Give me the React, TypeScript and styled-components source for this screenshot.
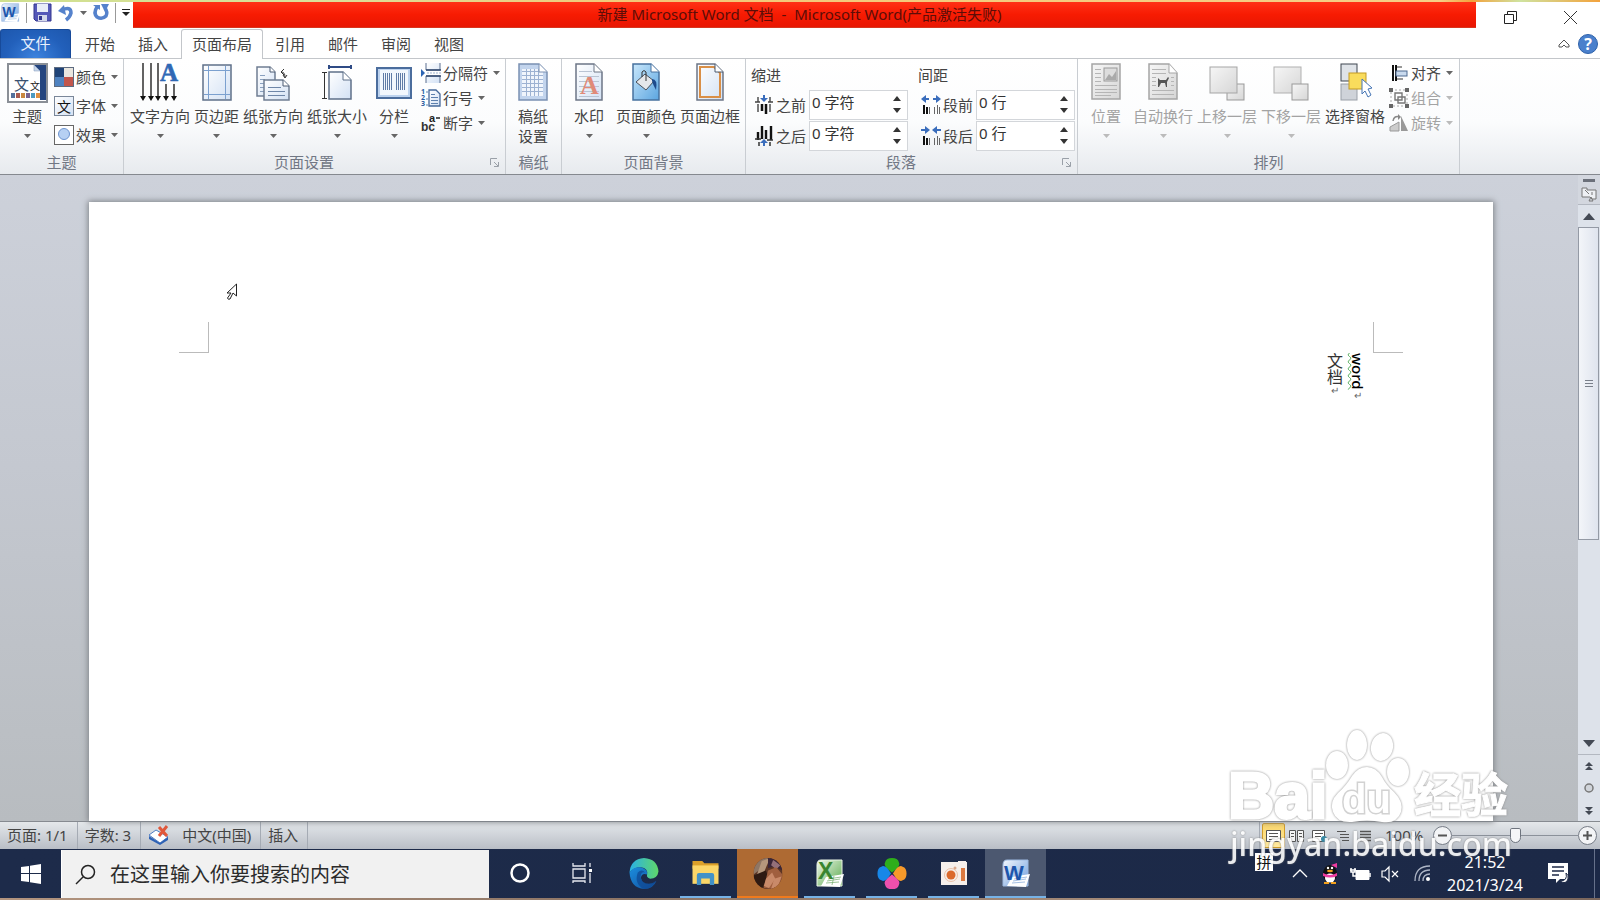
import React, { useState } from "react";
import styled, { createGlobalStyle, css } from "styled-components";

const GlobalStyle = createGlobalStyle`
  *, *::before, *::after { box-sizing: border-box; }
  html, body { margin: 0; padding: 0; }
  body {
    font-family: "Noto Sans", "Noto Sans CJK SC", sans-serif;
    font-size: 15px;
    line-height: 20px;
    color: #444;
  }
  button, input {
    font: inherit;
    color: inherit;
    margin: 0;
    padding: 0;
    border: 0;
    background: none;
    outline: none;
  }
  svg { display: block; flex: none; overflow: visible; }
`;

const Desktop = styled.div`
  position: relative;
  display: flex;
  flex-direction: column;
  min-height: 100vh;
  overflow: hidden;
  background: #fff;
`;

/* ---------- title bar ---------- */

const TopStrip = styled.div`
  height: 2px;
  background: linear-gradient(90deg, #cfe08f 0, #dbe09a 20%, #f3c777 40%, #f6cf86 90%, #f3a23c 92%, #cfe3a0 95%, #f3a23c 100%);
`;

const TitleBar = styled.header`
  display: flex;
  height: 27px;
`;

const QuickAccess = styled.div`
  display: flex;
  align-items: center;
  width: 133px;
  padding: 0 0 6px 1px;
  gap: 6px;
`;

const PlainButton = styled.button`
  display: flex;
  align-items: center;
  justify-content: center;
`;

const QuickDivider = styled.span`
  width: 1px;
  height: 20px;
  background: #999;
`;

const WindowTitle = styled.h1`
  flex: 1;
  margin: 0;
  padding-right: 10px;
  height: 26px;
  font-size: 15px;
  font-weight: 400;
  line-height: 25px;
  text-align: center;
  color: #5c0d08;
  background: linear-gradient(#ff3116, #f71b02 50%, #e81602);
  border-bottom: 1px solid #d8361f;
  span { padding: 0 4px; }
`;

const WindowButtons = styled.div`
  display: flex;
  width: 124px;
  padding: 3px 0 0 4px;
  button { flex: 1; }
`;

/* ---------- tabs ---------- */

const TabRow = styled.nav`
  display: flex;
  align-items: stretch;
  height: 30px;
  border-bottom: 1px solid #c3c6ca;
`;

const FileTab = styled.button`
  width: 71px;
  margin-right: 3px;
  padding-bottom: 2px;
  color: #e9f1fd;
  border: 1px solid #174a9a;
  border-bottom: 0;
  border-radius: 3px 3px 0 0;
  background: radial-gradient(ellipse at 50% 100%, #3d83de, #2260bb 60%, #1d57ad);
`;

const Tab = styled.button<{ $active?: boolean }>`
  padding: 0 10px 1px;
  margin: 0 1px -1px 0;
  border: 1px solid transparent;
  border-bottom: 0;
  ${(p) =>
    p.$active &&
    css`
      margin: 0 1px -1px 1px;
      background: #fff;
      border-color: #c3c6ca;
      border-radius: 3px 3px 0 0;
    `}
`;

const TabTools = styled.div`
  display: flex;
  align-items: center;
  gap: 8px;
  margin-left: auto;
  padding-right: 2px;
`;

/* ---------- ribbon ---------- */

const Ribbon = styled.section`
  display: flex;
  height: 116px;
  background: linear-gradient(#fff, #fbfcfd 55%, #e7eaee);
  border-bottom: 1px solid #85898f;
`;

const Group = styled.section<{ $w: number }>`
  display: flex;
  flex-direction: column;
  width: ${(p) => p.$w}px;
  border-right: 1px solid #c9cdd2;
`;

const GroupBody = styled.div<{ $pad?: number }>`
  display: flex;
  align-items: flex-start;
  height: 91px;
  padding-left: ${(p) => p.$pad ?? 2}px;
`;

const GroupFooter = styled.div`
  display: flex;
  align-items: center;
  height: 24px;
  padding: 0 6px;
  color: #717784;
`;

const GroupName = styled.h2<{ $inset?: boolean }>`
  flex: 1;
  margin: 0;
  padding-right: ${(p) => (p.$inset ? 12 : 0)}px;
  font-size: 15px;
  font-weight: 400;
  line-height: 20px;
  text-align: center;
`;

const LargeButton = styled.button<{ $dim?: boolean; $min?: number }>`
  display: flex;
  flex-direction: column;
  align-items: center;
  min-width: ${(p) => p.$min ?? 50}px;
  padding: 4px 2px 0;
  white-space: nowrap;
  line-height: 20px;
  color: ${(p) => (p.$dim ? "#a3a3a3" : "#444")};
`;

const IconBox = styled.span`
  display: flex;
  align-items: flex-start;
  justify-content: center;
  height: 43px;
`;

const ArrowBox = styled.span`
  display: flex;
  align-items: center;
  height: 20px;
`;

const SmallStack = styled.div<{ $row: number; $top: number }>`
  display: flex;
  flex-direction: column;
  padding: ${(p) => p.$top}px 0 0 2px;
  button { height: ${(p) => p.$row}px; }
`;

const SmallButton = styled.button<{ $dim?: boolean }>`
  display: flex;
  align-items: center;
  gap: 2px;
  white-space: nowrap;
  color: ${(p) => (p.$dim ? "#a3a3a3" : "#444")};
  svg:last-child { margin-left: 3px; }
`;

const SpinGroup = styled(GroupBody)`
  gap: 10px;
  padding-top: 4px;
`;

const SpinColumn = styled.div`
  display: flex;
  flex-direction: column;
`;

const SpinTitle = styled.div`
  height: 26px;
  padding-top: 2px;
`;

const SpinRow = styled.div`
  display: flex;
  align-items: center;
  height: 31px;
  padding-left: 3px;
  label {
    display: flex;
    align-items: center;
    gap: 2px;
    width: 55px;
  }
`;

const SpinField = styled.div`
  display: flex;
  width: 99px;
  height: 30px;
  background: #fff;
  border: 1px solid #d3d6da;
  input {
    flex: 1;
    min-width: 0;
    padding: 0 0 5px 2px;
    color: #333;
  }
`;

const SpinButtons = styled.div`
  display: flex;
  flex-direction: column;
  width: 20px;
  padding: 2px 0;
  button { flex: 1; }
`;

/* ---------- document ---------- */

const Workspace = styled.main`
  position: relative;
  display: flex;
  flex: 1;
  background: linear-gradient(#cdd1da, #c4c8d0 45%, #b8bcc0);
`;

const Sheet = styled.article`
  flex: 1;
  margin: 27px 85px 0 89px;
  padding: 120px 90px 0;
  background: #fff;
  box-shadow: 0 0 6px 1px #7d8287;
`;

const MarginMarks = styled.div`
  display: flex;
  justify-content: space-between;
`;

const Mark = styled.span<{ $side: "left" | "right" }>`
  width: 30px;
  height: 31px;
  border-bottom: 1px solid #bbb;
  ${(p) => (p.$side === "left" ? "border-right" : "border-left")}: 1px solid #bbb;
`;

const BodyText = styled.div`
  writing-mode: vertical-rl;
  width: 100%;
  height: 60px;
  padding-right: 34px;
  color: #333;
  line-height: 23px;
  p { margin: 0; }
`;

const LatinWord = styled.span`
  font-size: 15px;
  font-weight: 500;
  color: #000;
  text-decoration: underline wavy #4faa57 1px;
  text-underline-position: left;
  text-underline-offset: -2px;
`;

const CjkWord = styled.span`
  font-family: "Noto Sans CJK SC", sans-serif;
  font-size: 16px;
`;

const Return = styled.span`
  font-size: 10px;
  text-orientation: upright;
  color: #666;
`;

const Pointer = styled.span`
  position: absolute;
  left: 226px;
  top: 108px;
`;

const Scrollbar = styled.aside`
  display: flex;
  flex-direction: column;
  width: 22px;
  background: #dde2ea;
  button { width: 100%; height: 22px; flex: none; }
`;

const SplitBox = styled.div`
  display: flex;
  flex-direction: column;
  align-items: center;
  gap: 4px;
  height: 30px;
  padding-top: 4px;
  background: #d3d7df;
  border-bottom: 1px solid #b3b8c1;
`;

const ScrollTrack = styled.div`
  flex: 1;
  padding-right: 1px;
`;

const ScrollThumb = styled.div`
  display: flex;
  align-items: center;
  justify-content: center;
  height: 62%;
  border: 1px solid #949aa5;
  background: linear-gradient(90deg, #f3f5f9, #dfe4ee);
`;

const BrowseButtons = styled.div`
  border-top: 1px solid #b3b8c1;
`;

/* ---------- status bar ---------- */

const StatusBar = styled.footer`
  display: flex;
  align-items: stretch;
  height: 28px;
  padding-right: 3px;
  border-top: 1px solid #868a90;
  background: linear-gradient(#e4e7ea, #cfd3d9 50%, #b9bec6);
`;

const StatusCell = styled.div`
  display: flex;
  align-items: center;
  gap: 12px;
  padding: 0 9px 2px 7px;
  border-right: 1px solid #a5abb4;
`;

const ViewButtons = styled.div`
  display: flex;
  align-items: center;
  margin-left: auto;
  padding: 0 8px 0 2px;
  border-left: 1px solid #a5abb4;
`;

const ViewButton = styled.button<{ $active?: boolean }>`
  display: flex;
  align-items: center;
  justify-content: center;
  width: 23px;
  height: 25px;
  ${(p) =>
    p.$active &&
    css`
      border: 1px solid #d19c29;
      border-radius: 2px;
      background: linear-gradient(#fbd66a, #ffe9a0);
    `}
`;

const ZoomArea = styled.div`
  display: flex;
  align-items: center;
  output { width: 48px; padding-bottom: 2px; }
`;

const RoundButton = styled.button`
  display: flex;
  align-items: center;
  justify-content: center;
  width: 19px;
  height: 19px;
  border: 1px solid #777d87;
  border-radius: 50%;
  background: #f3f4f6;
`;

const ZoomRange = styled.input`
  appearance: none;
  width: 126px;
  height: 20px;
  background: linear-gradient(#8b919a, #8b919a) center / 100% 1px no-repeat;
  &::-webkit-slider-thumb {
    appearance: none;
    width: 11px;
    height: 15px;
    border: 1px solid #6e747e;
    border-radius: 2px 2px 6px 6px;
    background: #f5f6f8;
  }
`;

/* ---------- task bar ---------- */

const TaskBar = styled.div`
  display: flex;
  height: 49px;
  background: linear-gradient(90deg, #1d2b4a, #1c2947);
`;

const StartButton = styled(PlainButton)`
  width: 61px;
`;

const SearchBox = styled.label`
  display: flex;
  align-items: center;
  gap: 14px;
  width: 428px;
  margin-top: 1px;
  padding-left: 13px;
  background: #f1f1f1;
  border-left: 1px solid #fff;
  input {
    flex: 1;
    min-width: 0;
    height: 30px;
    font-size: 20px;
  }
  input::placeholder { color: #2b2b2b; opacity: 1; }
`;

const TaskItems = styled.div`
  display: flex;
  gap: 1px;
`;

const TaskItem = styled.button<{ $state?: "running" | "alert" | "active" }>`
  display: flex;
  flex-direction: column;
  align-items: center;
  justify-content: space-between;
  width: 61px;
  background: ${(p) => (p.$state === "alert" ? "#ae6a33" : p.$state === "active" ? "#4c5870" : "transparent")};
  &::before { content: ""; height: 1px; }
  &::after {
    content: "";
    width: ${(p) => (p.$state === "running" ? 51 : 61)}px;
    height: 2px;
    background: ${(p) => (p.$state === "alert" ? "#f07a1c" : p.$state ? "#76b2e6" : "transparent")};
  }
`;

const Tray = styled.div`
  display: flex;
  align-items: center;
  margin-left: auto;
  padding-right: 5px;
  color: #fff;
`;

const TrayButton = styled(PlainButton)<{ $w?: number }>`
  width: ${(p) => p.$w ?? 30}px;
  height: 40px;
`;

const ImeBadge = styled.button`
  align-self: flex-start;
  width: 18px;
  height: 18px;
  margin: 4px 12px 0 0;
  color: #111;
  font-size: 15px;
  line-height: 18px;
  background: #fff;
`;

const Clock = styled.time`
  width: 86px;
  margin: 0 20px 0 3px;
  font-size: 16px;
  line-height: 23px;
  text-align: center;
`;

const DesktopPeek = styled.span`
  align-self: stretch;
  width: 1px;
  margin-left: 25px;
  background: #66718a;
`;

const BottomStrip = styled.div`
  height: 2px;
  background: linear-gradient(90deg, #b3957f, #8d7565 40%, #a48a78 70%, #7b675c);
`;

/* ---------- watermark ---------- */

const Watermark = styled.div`
  position: absolute;
  right: 86px;
  bottom: 38px;
  width: 286px;
  pointer-events: none;
  color: #fff;
`;

const WatermarkLogo = styled.div`
  display: flex;
  align-items: flex-end;
  height: 96px;
  filter: drop-shadow(0 0 1px #8a8a8a);
`;

const LogoLatin = styled.span`
  width: 96px;
  font-family: "Liberation Sans", Arial, sans-serif;
  font-size: 64px;
  font-weight: 700;
  line-height: 60px;
  text-align: right;
  -webkit-text-stroke: 3px #fff;
`;

const LogoCjk = styled.span`
  padding: 0 0 6px 2px;
  font-family: "Noto Sans CJK SC", sans-serif;
  font-size: 47px;
  font-weight: 700;
  line-height: 56px;
  white-space: nowrap;
  -webkit-text-stroke: 1px #fff;
`;

const WatermarkSite = styled.div`
  font-size: 32px;
  font-weight: 500;
  line-height: 36px;
  white-space: nowrap;
  text-align: center;
  opacity: 0.9;
  text-shadow: 0 0 2px #777;
`;

/* ---------- icons ---------- */

const Caret = ({ dim, up, big, color }: { dim?: boolean; up?: boolean; big?: boolean; color?: string }) => (
  <svg width={big ? 12 : color ? 8 : 7} height={big ? 7 : color ? 5 : 4} viewBox="0 0 8 4" preserveAspectRatio="none">
    <path d={up ? "M0 4L4 0L8 4Z" : "M0 0H8L4 4Z"} fill={color ?? (dim ? "#bbb" : "#666")} />
  </svg>
);

const IconDefs = () => (
  <svg width="0" height="0" style={{ position: "absolute" }} aria-hidden="true">
    <defs>
      <linearGradient id="paper" x1="0" y1="0" x2="1" y2="1">
        <stop offset="0" stopColor="#fff" />
        <stop offset="1" stopColor="#d3e1f4" />
      </linearGradient>
      <linearGradient id="sky" x1="0" y1="0" x2="1" y2="1">
        <stop offset="0" stopColor="#c9e7fb" />
        <stop offset="1" stopColor="#5ba5e0" />
      </linearGradient>
      <linearGradient id="grey" x1="0" y1="0" x2="1" y2="1">
        <stop offset="0" stopColor="#f6f6f6" />
        <stop offset="1" stopColor="#d6d6d6" />
      </linearGradient>
      <linearGradient id="excel" x1="0" y1="0" x2="1" y2="1">
        <stop offset="0" stopColor="#f1f8ec" />
        <stop offset="1" stopColor="#58a94b" />
      </linearGradient>
      <linearGradient id="word" x1="0" y1="0" x2="1" y2="1">
        <stop offset="0" stopColor="#f4f8fe" />
        <stop offset="1" stopColor="#6b9bdc" />
      </linearGradient>
      <linearGradient id="edgeTop" x1="0" y1="0" x2="1" y2="0">
        <stop offset="0" stopColor="#2ab0e6" />
        <stop offset="1" stopColor="#5fd76a" />
      </linearGradient>
      <linearGradient id="edgeLow" x1="0" y1="0" x2="1" y2="1">
        <stop offset="0" stopColor="#1b8ede" />
        <stop offset="1" stopColor="#124f9e" />
      </linearGradient>
    </defs>
  </svg>
);

const WordMark = ({ size }: { size: number }) => (
  <svg width={size} height={size} viewBox="0 0 28 28">
    <path d="M5 1H26V27H1V6Q1 1 5 1Z" fill="url(#word)" stroke="#9db9e0" />
    <path d="M10 18L28 15L24 28L5 27Z" fill="#fff" />
    <path d="M12 20L25 18M11 22L24 20M10 24L23 23" stroke="#8fb0dc" strokeWidth=".8" />
    <text x="2" y="21" fontSize="21" fontWeight="700" fontFamily="Liberation Sans, sans-serif" fill="#1d55ab">W</text>
  </svg>
);

const SaveIcon = () => (
  <svg width="19" height="19" viewBox="0 0 19 19">
    <path d="M1 1H18V18H3L1 16Z" fill="#5558b8" stroke="#34378f" />
    <rect x="4" y="1" width="11" height="8" fill="#e9edf8" />
    <rect x="5" y="12" width="9" height="6" fill="#d5d9ea" />
    <rect x="6" y="13" width="3" height="4" fill="#34378f" />
  </svg>
);

const UndoIcon = () => (
  <svg width="16" height="17" viewBox="0 0 16 17">
    <path d="M4 6Q13 2 13 9Q12 13 8 16" fill="none" stroke="#5582cc" strokeWidth="3.500" />
    <path d="M0 7L6 1L8 11Z" fill="#5582cc" />
  </svg>
);

const RedoIcon = () => (
  <svg width="16" height="17" viewBox="0 0 16 17">
    <path d="M4 3Q0 9 4 13Q9 16 13 12Q15 8 12 4" fill="none" stroke="#5582cc" strokeWidth="3.500" />
    <path d="M8 0H16L12 8Z" fill="#5582cc" />
    <path d="M0 1H7V6Z" fill="#5582cc" />
  </svg>
);

const ThemesIcon = () => (
  <svg width="41" height="40" viewBox="0 0 41 40">
    <rect x="1" y="1" width="39" height="38" fill="#fff" stroke="#8a8f96" strokeWidth="2" />
    <path d="M27 2H39V37H33V8Z" fill="#24457f" />
    <path d="M27 2V8H33Z" fill="#c9d7ea" stroke="#7d94b8" strokeWidth=".5" />
    <text x="7" y="27" fontSize="15" fontFamily="Noto Sans CJK SC, sans-serif" fill="#38506f">文</text>
    <text x="23" y="27" fontSize="10" fontFamily="Noto Sans CJK SC, sans-serif" fill="#222">文</text>
    {["#54719c", "#a85a4f", "#c9883f", "#76628f", "#4d9ac0", "#e0903f"].map((c, i) => (
      <rect key={c} x={4 + i * 5} y="30" width="4" height="5" fill={c} />
    ))}
  </svg>
);

const ColorsIcon = () => (
  <svg width="20" height="20" viewBox="0 0 20 20">
    <rect width="10" height="10" fill="#1f4377" />
    <rect x="10" width="10" height="10" fill="#e9e6df" />
    <rect y="10" width="10" height="10" fill="#4f82c0" />
    <rect x="10" y="10" width="10" height="10" fill="#c2564c" />
    <rect x=".5" y=".5" width="19" height="19" fill="none" stroke="#5d6b80" />
  </svg>
);

const FontsIcon = () => (
  <svg width="20" height="20" viewBox="0 0 20 20">
    <rect x=".5" y=".5" width="19" height="19" fill="url(#paper)" stroke="#7a8799" />
    <text x="3" y="16" fontSize="14" fontFamily="Noto Sans CJK SC, sans-serif" fill="#111">文</text>
  </svg>
);

const EffectsIcon = () => (
  <svg width="20" height="20" viewBox="0 0 20 20">
    <rect x=".5" y=".5" width="19" height="19" fill="#fff" stroke="#666" />
    <circle cx="10" cy="9" r="5.5" fill="#b6d0f3" stroke="#6d94cf" />
  </svg>
);

const TextDirectionIcon = () => (
  <svg width="38" height="38" viewBox="0 0 38 38">
    <g stroke="#222" strokeWidth="1.4">
      <path d="M2 0V36M10 0V36M17 0V36M25 21V36M33 21V36" />
    </g>
    <g fill="#111">
      {[2, 10, 17, 25, 33].map((x) => (
        <path key={x} d={`M${x - 3} 33H${x + 3}L${x} 38Z`} />
      ))}
    </g>
    <text x="19" y="18" fontSize="25" fontWeight="700" fontFamily="Liberation Serif, serif" fill="#2f68b5" stroke="#2f68b5" strokeWidth=".6">A</text>
  </svg>
);

const MarginsIcon = () => (
  <svg width="30" height="38" viewBox="0 0 30 38">
    <rect x="1" y="2" width="28" height="35" fill="url(#paper)" stroke="#5f7089" strokeWidth="1.5" />
    <path d="M6.500 3V36M23.500 3V36M2 7.500H28M2 31.500H28" stroke="#7ba0cf" />
  </svg>
);

const OrientationIcon = () => (
  <svg width="34" height="38" viewBox="0 0 34 38">
    <path d="M1 4H14L19 9V33H1Z" fill="url(#paper)" stroke="#6f7d92" strokeWidth="1.500" />
    <path d="M4 12.500H9M4 16.500H9M4 20.500H8M4 24.500H8M4 28.500H8" stroke="#89a0bf" />
    <path d="M8 17H27L33 23V37H8Z" fill="url(#paper)" stroke="#6f7d92" strokeWidth="1.500" />
    <path d="M14 4V9H19M27 17V23H33" fill="#fff" stroke="#4a5a73" />
    <path d="M12 24.500H25M12 28.500H29M12 32.500H29" stroke="#6e86a8" />
    <path d="M25 9Q29 9 29 14M25 9L28 6M25 9L28 12M27 12L29 15L31 12" fill="none" stroke="#333" />
  </svg>
);

const SizeIcon = () => (
  <svg width="30" height="38" viewBox="0 0 30 38">
    <path d="M7 4H29M7 2V6M29 2V6" stroke="#2f4b85" strokeWidth="2" />
    <path d="M2.500 9V36M0 9.500H5M0 35.500H5" stroke="#333" />
    <path d="M7 9H21L29 17V36H7Z" fill="url(#paper)" stroke="#5f7089" strokeWidth="1.500" />
    <path d="M21 9V17H29" fill="#fff" stroke="#5f7089" />
  </svg>
);

const ColumnsIcon = () => (
  <svg width="36" height="38" viewBox="0 0 36 38">
    <rect x="1" y="5" width="34" height="30" fill="#bdd3ef" stroke="#4b6d9d" strokeWidth="2" />
    <rect x="4" y="7" width="28" height="25" fill="#f2f7fd" />
    <path
      d="M7.500 10V27M9.500 10V27M11.500 10V27M13.500 10V27M15.500 10V27M20.500 10V27M22.500 10V27M24.500 10V27M26.500 10V27M28.500 10V27"
      stroke="#5f7ba6"
    />
  </svg>
);

const BreaksIcon = () => (
  <svg width="20" height="20" viewBox="0 0 20 20">
    <path d="M5 0V7H19V0M5 20V13H19V20" fill="url(#paper)" stroke="#5b6f8f" />
    <path d="M5 7H20M5 13H20" stroke="#31486f" strokeWidth="1.500" />
    <path d="M0 6L4 10L0 14Z" fill="#2d65b3" />
    <path d="M6 10H20" stroke="#9fb3cf" strokeDasharray="2 1" />
  </svg>
);

const LineNumbersIcon = () => (
  <svg width="20" height="20" viewBox="0 0 20 20">
    {["1", "2", "3"].map((n, i) => (
      <text key={n} x="0" y={6 + i * 6} fontSize="7" fontWeight="700" fill="#2a5c9e">{n}</text>
    ))}
    <path d="M8 2H15L19 6V18H8Z" fill="url(#paper)" stroke="#46699a" strokeWidth="1.3" />
    <path d="M10 6.500H14M10 9.500H17M10 12.500H17M10 15.500H17M5 4H7M5 11H7M5 17H7" stroke="#5d80ae" />
  </svg>
);

const HyphenIcon = () => (
  <svg width="20" height="20" viewBox="0 0 20 20">
    <text x="8" y="9" fontSize="11" fontWeight="700" fontFamily="Liberation Sans, sans-serif" fill="#222">a</text>
    <path d="M15 5H19" stroke="#222" strokeWidth="1.5" />
    <text x="0" y="18" fontSize="12" fontWeight="700" fontFamily="Liberation Sans, sans-serif" fill="#333">bc</text>
  </svg>
);

const GridPaperIcon = () => (
  <svg width="30" height="38" viewBox="0 0 30 38">
    <path d="M1 1H21L29 9V37H1Z" fill="#c2d4ed" stroke="#7a90b2" strokeWidth="1.5" />
    <rect x="4" y="6" width="21" height="27" fill="#f0f5fc" />
    <path d="M4 8.500H25M4 12.500H25M4 16.500H25M4 20.500H25M4 24.500H25M4 28.500H25M8.500 6V33M12.500 6V33M16.500 6V33M20.500 6V33" stroke="#9db2d2" />
    <path d="M21 1V9H29" fill="#fff" stroke="#7a90b2" />
  </svg>
);

const WatermarkIcon = () => (
  <svg width="28" height="38" viewBox="0 0 28 38">
    <path d="M1 1H19L27 9V37H1Z" fill="url(#paper)" stroke="#6c7686" strokeWidth="1.5" />
    <path d="M4 8.500H17M4 13.500H24M4 18.500H24M4 23.500H24M4 28.500H24M4 33.500H24" stroke="#b9c4d3" />
    <text x="5" y="31" fontSize="26" fontWeight="700" fontFamily="Liberation Serif, serif" fill="#e08a78">A</text>
    <path d="M19 1V9H27" fill="#fff" stroke="#6c7686" />
  </svg>
);

const PageColorIcon = () => (
  <svg width="28" height="38" viewBox="0 0 28 38">
    <path d="M1 1H19L27 9V37H1Z" fill="url(#sky)" stroke="#47719f" strokeWidth="1.5" />
    <path d="M19 1V9H27" fill="#fff" stroke="#47719f" />
    <path d="M4 19L13 11L22 18L14 27Z" fill="#e5e7ea" stroke="#4a4f58" />
    <path d="M10 14V9Q12 6 14 9V18" fill="none" stroke="#333" />
    <path d="M20 16Q26 16 24 27Q21 22 20 18Z" fill="#1e4b8c" />
  </svg>
);

const BorderIcon = () => (
  <svg width="28" height="38" viewBox="0 0 28 38">
    <path d="M1 1H19L27 9V37H1Z" fill="url(#paper)" stroke="#6c7686" strokeWidth="1.5" />
    <path d="M4 4H18L24 10V34H4Z" fill="none" stroke="#d98f47" strokeWidth="2" />
    <path d="M19 1V9H27" fill="#fff" stroke="#4b5a70" />
  </svg>
);

const IndentIcon = ({ below }: { below?: boolean }) => (
  <svg width="20" height="20" viewBox="0 0 20 20">
    {below ? (
      <>
        <path d="M4 6V14M8 0V13M12 4V13M17 0V14" stroke="#111" strokeWidth="2.4" />
        <path d="M1 13H7M13 14H19M5 16V20M16 16V20" stroke="#333" strokeWidth="1.5" />
        <path d="M10 13L14 17H11V20H9V17H6Z" fill="#3a6dbc" />
      </>
    ) : (
      <>
        <path d="M4 2V7M1 7H6M16 2V7M14 7H19M4 9V17M16 9V17" stroke="#444" strokeWidth="1.4" />
        <path d="M8 9V16M12 9V19" stroke="#111" strokeWidth="2.5" />
        <path d="M10 7L6 3H9V0H11V3H14Z" fill="#3a6dbc" />
      </>
    )}
  </svg>
);

const SpacingIcon = ({ inward }: { inward?: boolean }) => (
  <svg width="20" height="20" viewBox="0 0 20 20">
    <path
      d={inward ? "M0 3H4V0L9 4L4 8V5H0ZM20 3H16V0L11 4L16 8V5H20Z" : "M8 3H5V0L0 4L5 8V5H8ZM12 3H15V0L20 4L15 8V5H12Z"}
      fill="#3a6dbc"
    />
    <path d="M3 10V19M6 12V19" stroke="#111" strokeWidth="2" />
    <path d="M8.500 12V19M13.500 12V19M16.500 10V19M18.500 12V19" stroke="#666" />
  </svg>
);

const PositionIcon = () => (
  <svg width="30" height="38" viewBox="0 0 30 38">
    <rect x="1" y="1" width="28" height="35" fill="url(#grey)" stroke="#a5a5a5" strokeWidth="1.5" />
    <path d="M4 6.500H10M4 10.500H10M4 14.500H10M4 18.500H10M4 22.500H26M4 26.500H26M4 29.500H26M4 32.500H20" stroke="#b5b5b5" />
    <rect x="13" y="5" width="13" height="13" fill="#ddd" stroke="#999" />
    <path d="M14 17L18 11L21 14L25 8V17Z" fill="#aaa" />
  </svg>
);

const WrapIcon = () => (
  <svg width="30" height="38" viewBox="0 0 30 38">
    <path d="M1 1H21L29 10V36H1Z" fill="url(#grey)" stroke="#a5a5a5" strokeWidth="1.5" />
    <path d="M21 1V10H29" fill="#fff" stroke="#a5a5a5" />
    <path d="M4 6.500H18M4 10.500H18M4 14.500H8M23 14.500H26M4 18.500H8M23 18.500H26M4 22.500H8M23 22.500H26M4 27.500H26M4 31.500H26" stroke="#b5b5b5" />
    <path d="M10 15L12 17L18 17L20 14L21 15L19 19V24H18L17 20L13 20L11 24H10V19Z" fill="#555" />
  </svg>
);

const LayerIcon = ({ back }: { back?: boolean }) => (
  <svg width="36" height="38" viewBox="0 0 36 38">
    {back ? (
      <>
        <rect x="1" y="4" width="27" height="26" fill="url(#grey)" stroke="#b0b0b0" />
        <rect x="19" y="21" width="16" height="16" fill="url(#grey)" stroke="#999" />
      </>
    ) : (
      <>
        <rect x="18" y="21" width="17" height="16" fill="url(#grey)" stroke="#999" />
        <rect x="1" y="4" width="27" height="26" fill="url(#grey)" stroke="#a5a5a5" />
      </>
    )}
  </svg>
);

const SelectionPaneIcon = () => (
  <svg width="34" height="38" viewBox="0 0 34 38">
    <rect x="3" y="1" width="16" height="17" fill="#dfe3e8" stroke="#3f4650" />
    <rect x="3" y="21" width="16" height="16" fill="#cfd3d9" stroke="#9aa0a8" />
    <rect x="11" y="10" width="17" height="16" fill="#f9dc5c" stroke="#c39a25" />
    <path d="M24 16L34 25L30 26L33 32L30 34L27 28L24 31Z" fill="#fff" stroke="#4474b4" />
  </svg>
);

const AlignIcon = () => (
  <svg width="20" height="20" viewBox="0 0 20 20">
    <path d="M4 2V18M7 2V18" stroke="#111" strokeWidth="2" />
    <path d="M8 4H13M8 16H14" stroke="#333" />
    <rect x="7" y="8" width="11" height="5" fill="#c9daee" stroke="#4e6a90" />
  </svg>
);

const GroupIcon = () => (
  <svg width="20" height="20" viewBox="0 0 20 20">
    <path d="M2 2H18V18H2Z" fill="none" stroke="#aaa" strokeDasharray="2 2" />
    <path d="M6 5H13V12H6ZM9 9H16V15H9Z" fill="none" stroke="#777" strokeWidth="1.4" />
    <path d="M0 0H4V4H0ZM16 0H20V4H16ZM0 16H4V20H0ZM16 16H20V20H16Z" fill="#666" />
  </svg>
);

const RotateIcon = () => (
  <svg width="20" height="20" viewBox="0 0 20 20">
    <path d="M1 14L10 9V18H1Z" fill="#ccc" stroke="#999" />
    <path d="M12 3L19 18H12Z" fill="#999" />
    <path d="M4 8Q5 2 11 4" fill="none" stroke="#888" strokeWidth="1.5" />
    <path d="M9 1L12 4L9 7Z" fill="#888" />
  </svg>
);

const LauncherIcon = () => (
  <svg width="9" height="9" viewBox="0 0 9 9">
    <path d="M.5 7V.5H7M4 4L8 8M8.500 4V8.500H4" fill="none" stroke="#9aa0a8" />
  </svg>
);

const PageViewIcon = ({ kind }: { kind: number }) => (
  <svg width="15" height="14" viewBox="0 0 15 14">
    {kind === 0 && <path d="M.5 1.500H14.500V12.500H.5ZM3 4.500H12M3 7.500H12M3 10.500H12" fill="#fff" stroke="#555" />}
    {kind === 1 && <path d="M.5 1.500H6.500V12.500H.5ZM8.500 1.500H14.500V12.500H8.500ZM2 4.500H5M2 7.500H5M10 4.500H13M10 7.500H13" fill="#f5f5f5" stroke="#555" />}
    {kind === 2 && (
      <>
        <path d="M.5 1.500H12.500V12.500H.5ZM3 4.500H11M3 7.500H9" fill="#fff" stroke="#555" />
        <circle cx="12" cy="10" r="3" fill="#388aa5" />
      </>
    )}
    {kind === 3 && <path d="M2 2.500H11M5 5.500H14M5 8.500H14M7 11.500H14" stroke="#555" />}
    {kind === 4 && <path d="M2 2.500H13M2 5.500H13M2 8.500H13M2 11.500H13" stroke="#555" strokeWidth="1.500" />}
  </svg>
);

const ProofIcon = () => (
  <svg width="22" height="20" viewBox="0 0 22 20">
    <path d="M1 10L8 5L20 12L12 18Z" fill="#fff" stroke="#4f7ec6" />
    <path d="M1 11V14L12 20L20 15V12L12 18Z" fill="#2e62b5" />
    <path d="M11 2L19 11M19 1L11 11" stroke="#e2583a" strokeWidth="3" />
  </svg>
);

const EdgeIcon = () => (
  <svg width="30" height="31" viewBox="0 0 28 30">
    <path d="M0 14Q1 1 14 0Q27 1 28 13Q27 20 20 20Q16 19 17 16Q18 10 11 9Q4 9 0 14Z" fill="url(#edgeTop)" />
    <path d="M0 14Q4 8 11 9Q18 11 17 16Q12 14 11 19Q12 26 21 25Q24 25 26 22Q23 30 14 30Q1 29 0 14Z" fill="url(#edgeLow)" />
    <path d="M8 14Q4 25 14 30Q22 30 26 22Q19 27 13 23Q10 20 11 16Q12 13 15 14Q12 10 8 14Z" fill="#0f4a94" opacity=".75" />
  </svg>
);

const FolderIcon = () => (
  <svg width="29" height="26" viewBox="0 0 26 24">
    <path d="M1 1H10L12 3H25V8H1Z" fill="#dba02a" />
    <path d="M1 5H25V22H1Z" fill="#fbd668" />
    <path d="M5 23V14Q5 12 7 12H19Q21 12 21 14V23H17V17H9V23Z" fill="#4392c7" />
  </svg>
);

const PortraitIcon = () => (
  <svg width="30" height="31" viewBox="0 0 28 30">
    <clipPath id="face"><ellipse cx="14" cy="15" rx="14" ry="15" /></clipPath>
    <g clipPath="url(#face)">
      <path d="M0 0H28V30H0Z" fill="#5c3524" />
      <path d="M0 0H14L8 10L0 16Z" fill="#8f7664" />
      <path d="M8 3L16 0L10 14L3 17Z" fill="#b5977c" />
      <path d="M14 0H28V12L20 8L14 10Z" fill="#3a2638" />
      <path d="M19 2L26 7L22 11L17 7Z" fill="#94707a" />
      <path d="M0 17L12 12L14 18L8 30H2Z" fill="#2f1a12" />
      <path d="M14 12L22 9L28 16V22L18 30L10 29Z" fill="#a05f3e" />
      <path d="M12 20L18 14L21 20L15 29L10 27Z" fill="#c98a69" />
      <path d="M20 20L27 18L24 27L17 30Z" fill="#c98a69" />
    </g>
  </svg>
);

const ExcelIcon = () => (
  <svg width="28" height="28" viewBox="0 0 28 28">
    <path d="M5 1H26V27H1V6Q1 1 5 1Z" fill="url(#excel)" stroke="#eaf4e5" />
    <path d="M10 18L28 15L24 28L5 27Z" fill="#fff" />
    <path d="M12 20L25 18M11 22L24 20M10 24L23 23M18 17L16 26" stroke="#7fb277" strokeWidth=".8" />
    <text x="2" y="20" fontSize="23" fontWeight="700" fontFamily="Liberation Sans, sans-serif" fill="#38852f">X</text>
  </svg>
);

const PetalsIcon = () => (
  <svg width="30" height="31" viewBox="0 0 30 32">
    <path d="M15 15Q5 8 8 4Q9 0 15 0Q21 0 22 4Q25 8 15 15Z" fill="#2eae1b" />
    <path d="M15 17Q25 24 22 28Q21 32 15 32Q9 32 8 28Q5 24 15 17Z" fill="#ee50ad" />
    <path d="M14 16Q8 6 4 9Q0 10 0 16Q0 22 4 23Q8 26 14 16Z" fill="#1787e8" />
    <path d="M16 16Q22 6 26 9Q30 10 30 16Q30 22 26 23Q22 26 16 16Z" fill="#f7992a" />
  </svg>
);

const RecorderIcon = () => (
  <svg width="28" height="26" viewBox="0 0 28 26">
    <path d="M1 2H18V1H26V2H27V25H1Z" fill="#f6efeb" />
    <circle cx="11" cy="15" r="4.500" fill="#db6a2d" />
    <circle cx="11" cy="15" r="6.5" fill="none" stroke="#eac2aa" />
    <circle cx="15" cy="8" r="1.500" fill="#dba88b" />
    <rect x="21" y="8" width="4" height="13" fill="#db7a42" />
  </svg>
);

const PenguinIcon = () => (
  <svg width="16" height="21" viewBox="0 0 16 21">
    <ellipse cx="8" cy="11" rx="7" ry="9" fill="#111" />
    <ellipse cx="8" cy="15" rx="5" ry="4.5" fill="#fff" />
    <path d="M1 10Q8 14 15 10V13Q8 16 1 13Z" fill="#ee3ba0" />
    <ellipse cx="8" cy="8" rx="3" ry="1.2" fill="#f2a01c" />
    <circle cx="6" cy="5" r="1.2" fill="#fff" />
    <circle cx="10" cy="5" r="1.2" fill="#fff" />
    <path d="M9 2L15 0V5Z" fill="#ee3ba0" />
    <path d="M2 19H7V21H2ZM9 19H14V21H9Z" fill="#f2a01c" />
  </svg>
);

const Paw = () => (
  <svg width="88" height="96" viewBox="0 0 88 96">
    <g fill="#fff">
      <ellipse cx="13" cy="35" rx="11" ry="14" />
      <ellipse cx="33" cy="15" rx="10" ry="15" />
      <ellipse cx="58" cy="17" rx="11" ry="14" transform="rotate(12 58 17)" />
      <ellipse cx="74" cy="42" rx="11" ry="14" />
      <path d="M43 37Q52 37 58 47Q62 55 70 62Q80 72 77 82Q73 94 58 92Q43 89 28 92Q13 93 9 82Q5 72 14 63Q22 56 28 46Q34 37 43 37Z" />
    </g>
    <text x="18" y="83" fontSize="40" fontWeight="700" fontFamily="Liberation Sans, sans-serif" fill="#fff" stroke="#d2d2d2" strokeWidth="3" paintOrder="stroke">du</text>
  </svg>
);

/* ---------- pieces ---------- */

type LargeProps = { icon: React.ReactNode; label: string; dim?: boolean; arrow?: boolean; min?: number; second?: string };

const Large = ({ icon, label, dim, arrow = true, min, second }: LargeProps) => (
  <LargeButton $dim={dim} $min={min} disabled={dim}>
    <IconBox>{icon}</IconBox>
    <span>{label}</span>
    {second ? <span>{second}</span> : <ArrowBox>{arrow && <Caret dim={dim} />}</ArrowBox>}
  </LargeButton>
);

const Small = ({ icon, label, dim }: { icon: React.ReactNode; label: string; dim?: boolean }) => (
  <SmallButton $dim={dim} disabled={dim}>
    {icon}
    <span>{label}</span>
    <Caret dim={dim} />
  </SmallButton>
);

const Footer = ({ name, launcher }: { name: string; launcher?: boolean }) => (
  <GroupFooter>
    <GroupName $inset={launcher}>{name}</GroupName>
    {launcher && <PlainButton aria-label={name}><LauncherIcon /></PlainButton>}
  </GroupFooter>
);

const Spin = ({ id, icon, label, initial }: { id: string; icon: React.ReactNode; label: string; initial: string }) => {
  const [value, setValue] = useState(initial);
  const step = (d: number) => {
    const [n, unit] = value.split(" ");
    setValue(`${Math.max(0, Number(n) + d)} ${unit}`);
  };
  return (
    <SpinRow>
      <label htmlFor={id}>{icon}{label}</label>
      <SpinField>
        <input id={id} value={value} onChange={(e) => setValue(e.target.value)} />
        <SpinButtons>
          <PlainButton aria-label="+" onClick={() => step(1)}><Caret up color="#333" /></PlainButton>
          <PlainButton aria-label="-" onClick={() => step(-1)}><Caret color="#333" /></PlainButton>
        </SpinButtons>
      </SpinField>
    </SpinRow>
  );
};

const TABS = ["开始", "插入", "页面布局", "引用", "邮件", "审阅", "视图"];

export default function App() {
  const [tab, setTab] = useState("页面布局");
  const [zoom, setZoom] = useState(100);

  return (
    <Desktop>
      <GlobalStyle />
      <IconDefs />
      <TopStrip />
      <TitleBar>
        <QuickAccess>
          <WordMark size={19} />
          <QuickDivider />
          <PlainButton aria-label="保存"><SaveIcon /></PlainButton>
          <PlainButton aria-label="撤消"><UndoIcon /></PlainButton>
          <Caret />
          <PlainButton aria-label="重复"><RedoIcon /></PlainButton>
          <QuickDivider />
          <PlainButton aria-label="自定义">
            <svg width="8" height="8" viewBox="0 0 8 8"><path d="M0 .5H8" stroke="#222" /><path d="M0 3H8L4 7Z" fill="#222" /></svg>
          </PlainButton>
        </QuickAccess>
        <WindowTitle>新建 Microsoft Word 文档<span> - </span>Microsoft Word(产品激活失败)</WindowTitle>
        <WindowButtons>
          <PlainButton aria-label="还原">
            <svg width="13" height="13" viewBox="0 0 13 13"><path d="M.5 3.5H9.5V12.5H.5ZM3.5 3V.5H12.5V9.5H10" fill="none" stroke="#222" /></svg>
          </PlainButton>
          <PlainButton aria-label="关闭">
            <svg width="13" height="13" viewBox="0 0 13 13"><path d="M0 0L13 13M13 0L0 13" stroke="#333" /></svg>
          </PlainButton>
        </WindowButtons>
      </TitleBar>

      <TabRow>
        <FileTab>文件</FileTab>
        {TABS.map((t) => (
          <Tab key={t} $active={t === tab} onClick={() => setTab(t)}>{t}</Tab>
        ))}
        <TabTools>
          <PlainButton aria-label="最小化功能区">
            <svg width="12" height="10" viewBox="0 0 12 10"><path d="M1 6L6 1L11 6V8H8L6 6L4 8H1Z" fill="#fff" stroke="#555" /></svg>
          </PlainButton>
          <PlainButton aria-label="帮助">
            <svg width="20" height="20" viewBox="0 0 20 20">
              <circle cx="10" cy="10" r="9.5" fill="#4a80cc" stroke="#2f62aa" />
              <text x="10" y="16" fontSize="16" fontWeight="700" textAnchor="middle" fill="#fff">?</text>
            </svg>
          </PlainButton>
        </TabTools>
      </TabRow>

      <Ribbon>
        <Group $w={124}>
          <GroupBody>
            <Large icon={<ThemesIcon />} label="主题" />
            <SmallStack $row={29} $top={3}>
              <Small icon={<ColorsIcon />} label="颜色" />
              <Small icon={<FontsIcon />} label="字体" />
              <Small icon={<EffectsIcon />} label="效果" />
            </SmallStack>
          </GroupBody>
          <Footer name="主题" />
        </Group>

        <Group $w={382}>
          <GroupBody $pad={4}>
            <Large icon={<TextDirectionIcon />} label="文字方向" />
            <Large icon={<MarginsIcon />} label="页边距" min={48} />
            <Large icon={<OrientationIcon />} label="纸张方向" />
            <Large icon={<SizeIcon />} label="纸张大小" />
            <Large icon={<ColumnsIcon />} label="分栏" />
            <SmallStack $row={25} $top={1}>
              <Small icon={<BreaksIcon />} label="分隔符" />
              <Small icon={<LineNumbersIcon />} label="行号" />
              <Small icon={<HyphenIcon />} label="断字" />
            </SmallStack>
          </GroupBody>
          <Footer name="页面设置" launcher />
        </Group>

        <Group $w={56}>
          <GroupBody>
            <Large icon={<GridPaperIcon />} label="稿纸" second="设置" />
          </GroupBody>
          <Footer name="稿纸" />
        </Group>

        <Group $w={184}>
          <GroupBody>
            <Large icon={<WatermarkIcon />} label="水印" />
            <Large icon={<PageColorIcon />} label="页面颜色" />
            <Large icon={<BorderIcon />} label="页面边框" arrow={false} />
          </GroupBody>
          <Footer name="页面背景" />
        </Group>

        <Group $w={332}>
          <SpinGroup $pad={5}>
            <SpinColumn>
              <SpinTitle>缩进</SpinTitle>
              <Spin id="indent-before" icon={<IndentIcon />} label="之前" initial="0 字符" />
              <Spin id="indent-after" icon={<IndentIcon below />} label="之后" initial="0 字符" />
            </SpinColumn>
            <SpinColumn>
              <SpinTitle>间距</SpinTitle>
              <Spin id="space-before" icon={<SpacingIcon />} label="段前" initial="0 行" />
              <Spin id="space-after" icon={<SpacingIcon inward />} label="段后" initial="0 行" />
            </SpinColumn>
          </SpinGroup>
          <Footer name="段落" launcher />
        </Group>

        <Group $w={382}>
          <GroupBody $pad={3}>
            <Large icon={<PositionIcon />} label="位置" dim />
            <Large icon={<WrapIcon />} label="自动换行" dim />
            <Large icon={<LayerIcon />} label="上移一层" dim />
            <Large icon={<LayerIcon back />} label="下移一层" dim />
            <Large icon={<SelectionPaneIcon />} label="选择窗格" arrow={false} />
            <SmallStack $row={25} $top={1}>
              <Small icon={<AlignIcon />} label="对齐" />
              <Small icon={<GroupIcon />} label="组合" dim />
              <Small icon={<RotateIcon />} label="旋转" dim />
            </SmallStack>
          </GroupBody>
          <Footer name="排列" />
        </Group>
      </Ribbon>

      <Workspace>
        <Sheet>
          <MarginMarks>
            <Mark $side="left" />
            <Mark $side="right" />
          </MarginMarks>
          <BodyText>
            <p><LatinWord>word</LatinWord><Return>↵</Return></p>
            <p><CjkWord>文档</CjkWord><Return>↵</Return></p>
          </BodyText>
        </Sheet>
        <Pointer>
          <svg width="12" height="18" viewBox="0 0 12 18">
            <path d="M10.500 1V13L7 10L4 16Q2 17 1.500 15L5 10H1Z" fill="#fff" stroke="#222" />
          </svg>
        </Pointer>
        <Scrollbar>
          <SplitBox>
            <svg width="12" height="3" viewBox="0 0 12 3"><path d="M0 1.500H12" stroke="#6b707a" strokeWidth="3" /></svg>
            <svg width="16" height="16" viewBox="0 0 16 16">
              <path d="M1 2H6V4H15V13H11L9 11H1Z" fill="#eef0f4" stroke="#777" />
              <path d="M4 4L8 8M10 11L12 15L8 15ZM11 6V9" fill="none" stroke="#777" />
            </svg>
          </SplitBox>
          <PlainButton aria-label="向上"><Caret up big color="#444a55" /></PlainButton>
          <ScrollTrack>
            <ScrollThumb>
              <svg width="8" height="7" viewBox="0 0 8 7"><path d="M0 .5H8M0 3.500H8M0 6.500H8" stroke="#7a808b" /></svg>
            </ScrollThumb>
          </ScrollTrack>
          <PlainButton aria-label="向下"><Caret big color="#444a55" /></PlainButton>
          <BrowseButtons>
            <PlainButton aria-label="前一页">
              <svg width="8" height="9" viewBox="0 0 8 9"><path d="M0 4L4 0L8 4ZM0 8L4 4L8 8Z" fill="#444a55" /></svg>
            </PlainButton>
            <PlainButton aria-label="选择浏览对象">
              <svg width="10" height="10" viewBox="0 0 10 10"><circle cx="5" cy="5" r="4" fill="#d0d4da" stroke="#777" strokeWidth="1.500" /></svg>
            </PlainButton>
            <PlainButton aria-label="下一页">
              <svg width="8" height="9" viewBox="0 0 8 9"><path d="M0 1H8L4 5ZM0 5H8L4 9Z" fill="#444a55" /></svg>
            </PlainButton>
          </BrowseButtons>
        </Scrollbar>
      </Workspace>

      <StatusBar>
        <StatusCell>页面: 1/1</StatusCell>
        <StatusCell>字数: 3</StatusCell>
        <StatusCell><ProofIcon />中文(中国)</StatusCell>
        <StatusCell>插入</StatusCell>
        <ViewButtons>
          {["页面视图", "阅读版式", "Web 版式", "大纲", "草稿"].map((v, i) => (
            <ViewButton key={v} aria-label={v} $active={i === 0}><PageViewIcon kind={i} /></ViewButton>
          ))}
        </ViewButtons>
        <ZoomArea>
          <output htmlFor="zoom">{zoom}%</output>
          <RoundButton aria-label="缩小" onClick={() => setZoom(zoom - 10)}>
            <svg width="9" height="9" viewBox="0 0 9 9"><path d="M0 4.500H9" stroke="#555" strokeWidth="2" /></svg>
          </RoundButton>
          <ZoomRange id="zoom" type="range" aria-label="显示比例" min={0} max={200} value={zoom} onChange={(e) => setZoom(Number(e.target.value))} />
          <RoundButton aria-label="放大" onClick={() => setZoom(zoom + 10)}>
            <svg width="9" height="9" viewBox="0 0 9 9"><path d="M0 4.500H9M4.500 0V9" stroke="#555" strokeWidth="2" /></svg>
          </RoundButton>
        </ZoomArea>
      </StatusBar>

      <TaskBar>
        <StartButton aria-label="开始菜单">
          <svg width="20" height="20" viewBox="0 0 20 20"><path d="M0 3L8 2V9H0ZM9 1.800L20 0V9H9ZM0 10H8V18L0 17ZM9 10H20V20L9 18.200Z" fill="#fff" /></svg>
        </StartButton>
        <SearchBox>
          <svg width="21" height="21" viewBox="0 0 21 21"><circle cx="13" cy="8" r="6.500" fill="none" stroke="#222" strokeWidth="1.500" /><path d="M8 13L1 20" stroke="#222" strokeWidth="1.500" /></svg>
          <input type="search" aria-label="搜索" placeholder="在这里输入你要搜索的内容" />
        </SearchBox>
        <TaskItems>
          <TaskItem aria-label="Cortana">
            <svg width="20" height="20" viewBox="0 0 20 20"><ellipse cx="10" cy="10" rx="8.500" ry="8.500" fill="none" stroke="#fff" strokeWidth="2.500" /></svg>
          </TaskItem>
          <TaskItem aria-label="任务视图">
            <svg width="20" height="20" viewBox="0 0 20 20"><path d="M1 0V3H13V0M1 6H13V15H1ZM1 20V18H13V20M18 0V4M18 10V20" fill="none" stroke="#e6e9f0" strokeWidth="1.300" /><rect x="17" y="6" width="3" height="3" fill="#fff" /></svg>
          </TaskItem>
          <TaskItem aria-label="Edge"><EdgeIcon /></TaskItem>
          <TaskItem aria-label="文件资源管理器" $state="running"><FolderIcon /></TaskItem>
          <TaskItem aria-label="头像" $state="alert"><PortraitIcon /></TaskItem>
          <TaskItem aria-label="Excel" $state="running"><ExcelIcon /></TaskItem>
          <TaskItem aria-label="图片" $state="running"><PetalsIcon /></TaskItem>
          <TaskItem aria-label="录屏" $state="running"><RecorderIcon /></TaskItem>
          <TaskItem aria-label="Word" $state="active"><WordMark size={28} /></TaskItem>
        </TaskItems>
        <Tray>
          <ImeBadge>拼</ImeBadge>
          <TrayButton aria-label="显示隐藏的图标">
            <svg width="16" height="9" viewBox="0 0 16 9"><path d="M1 8L8 1L15 8" fill="none" stroke="#fff" strokeWidth="1.300" /></svg>
          </TrayButton>
          <TrayButton aria-label="QQ"><PenguinIcon /></TrayButton>
          <TrayButton aria-label="电池">
            <svg width="21" height="14" viewBox="0 0 21 14"><path d="M6 3.500H19V12.500H6Z" fill="#fff" stroke="#fff" /><path d="M20 6V10M1 1V5H5V1M3 5V9H6M0 3H6" fill="none" stroke="#fff" strokeWidth="1.500" /></svg>
          </TrayButton>
          <TrayButton aria-label="音量">
            <svg width="18" height="16" viewBox="0 0 18 16"><path d="M1 5H4L8 1V15L4 11H1ZM11 5L17 11M17 5L11 11" fill="none" stroke="#fff" strokeWidth="1.200" /></svg>
          </TrayButton>
          <TrayButton $w={34} aria-label="网络">
            <svg width="17" height="17" viewBox="0 0 17 17"><path d="M1 16Q1 1 16 1M5 16Q5 5 16 5M9 16Q9 9 16 9" fill="none" stroke="#aeb6c6" strokeWidth="1.300" /><circle cx="14" cy="14" r="2" fill="#fff" /></svg>
          </TrayButton>
          <Clock>21:52<br />2021/3/24</Clock>
          <PlainButton aria-label="通知">
            <svg width="21" height="21" viewBox="0 0 21 21"><path d="M0 0H20V16H12L8 20V16H0Z" fill="#fff" /><path d="M4 4H16M4 8H16M4 12H11" stroke="#1c2947" strokeWidth="1.500" /><path d="M18 10Q20 18 12 18Q18 22 20 16Q21 12 18 10Z" fill="#fff" stroke="#1c2947" /></svg>
          </PlainButton>
          <DesktopPeek />
        </Tray>
      </TaskBar>
      <BottomStrip />

      <Watermark>
        <WatermarkLogo>
          <LogoLatin>Bai</LogoLatin>
          <Paw />
          <LogoCjk>经验</LogoCjk>
        </WatermarkLogo>
        <WatermarkSite>jingyan.baidu.com</WatermarkSite>
      </Watermark>
    </Desktop>
  );
}
